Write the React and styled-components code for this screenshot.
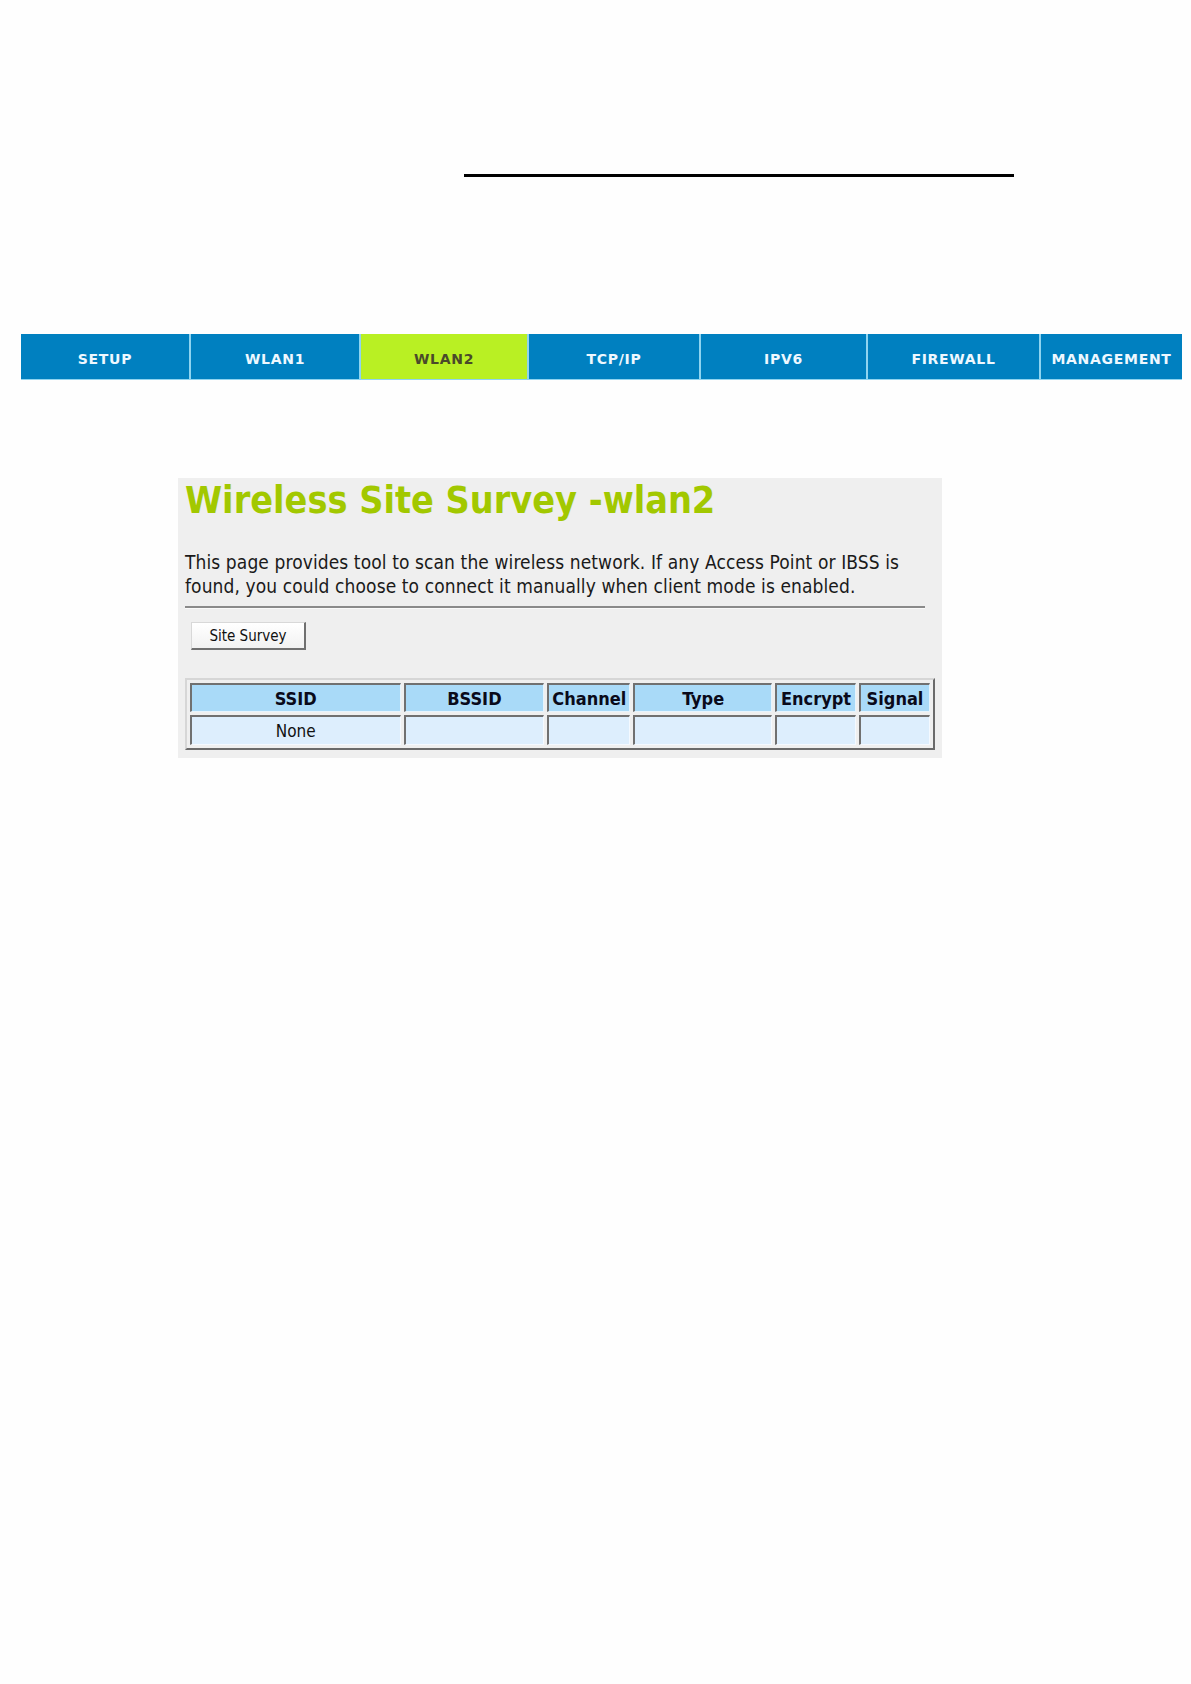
import React from 'react';
import styled, { createGlobalStyle } from 'styled-components';

const GlobalStyle = createGlobalStyle`
  body {
    margin: 0;
    background: #fefefe;
    font-family: "DejaVu Sans Condensed", "DejaVu Sans", sans-serif;
    font-stretch: condensed;
  }
`;

const Page = styled.div`
  width: 1191px;
  min-height: 1684px;
  padding-top: 174px;
  box-sizing: border-box;
`;

const TopRule = styled.div`
  margin-left: 464px;
  width: 550px;
  border-top: 3px solid #000;
`;

const NavBar = styled.ul`
  list-style: none;
  margin: 157px 9px 0 21px;
  padding: 0;
  display: flex;
  height: 45px;
  background-color: #0080c0;
  border-bottom: 1px solid #8fd4f0;
`;

const NavItem = styled.li`
  width: ${(p) => p.$w}px;
  flex: ${(p) => (p.$last ? '1' : 'none')};
  box-sizing: border-box;
  display: flex;
  align-items: center;
  justify-content: center;
  background-color: ${(p) => (p.$active ? '#b9f023' : '#0080c0')};
  border-left: ${(p) => (p.$first ? 'none' : '2px solid #8fd4f0')};
  color: ${(p) => (p.$active ? '#4a4a2a' : '#eef8ff')};
  font-family: "DejaVu Sans", sans-serif;
  font-stretch: normal;
  font-weight: bold;
  font-size: 14px;
  letter-spacing: 0.7px;
  padding-top: 4px;
`;

const Panel = styled.div`
  margin: 98px 0 0 178px;
  width: 764px;
  background-color: #efefef;
  padding: 1px 7px 8px 7px;
  box-sizing: border-box;
`;

const Title = styled.h1`
  margin: 0;
  color: #a2c800;
  font-size: 37.4px;
  font-weight: bold;
  line-height: 42px;
`;

const Intro = styled.p`
  margin: 29px 0 0 0;
  font-size: 19px;
  line-height: 24px;
  letter-spacing: 0.1px;
  color: #1a1a1a;
  max-width: 740px;
`;

const Divider = styled.hr`
  margin: 8px 10px 0 0;
  border: none;
  border-top: 2px solid #8a8a8a;
  border-bottom: 1px solid #fafafa;
`;

const SurveyButton = styled.button`
  margin: 13px 0 0 6px;
  width: 115px;
  height: 28px;
  padding: 0;
  font-family: "DejaVu Sans Condensed", "DejaVu Sans", sans-serif;
  font-stretch: condensed;
  font-size: 15px;
  color: #111;
  background: linear-gradient(#ffffff, #f2f2f2);
  border: 1px solid #d8d8d8;
  border-right: 2px solid #707070;
  border-bottom: 2px solid #707070;
`;

const SurveyTable = styled.table`
  margin-top: 28px;
  border-collapse: separate;
  border-spacing: 3px;
  table-layout: fixed;
  border-top: 2px solid #d6d6d6;
  border-left: 2px solid #d6d6d6;
  border-right: 2px solid #6a6a6a;
  border-bottom: 2px solid #6a6a6a;
`;

const HeadCell = styled.th`
  width: ${(p) => p.$w}px;
  height: 29px;
  box-sizing: border-box;
  padding: 0;
  background-color: #a9daf8;
  border-top: 2px solid #707070;
  border-left: 2px solid #707070;
  border-right: 1px solid #e6f4fd;
  border-bottom: 1px solid #e6f4fd;
  font-size: 18px;
  font-weight: bold;
  color: #0a0a1a;
  text-align: center;
  white-space: nowrap;
  overflow: hidden;
`;

const DataCell = styled.td`
  height: 30px;
  box-sizing: border-box;
  padding: 0;
  background-color: #ddeefd;
  border-top: 2px solid #707070;
  border-left: 2px solid #707070;
  border-right: 1px solid #f4f9ff;
  border-bottom: 1px solid #f4f9ff;
  font-size: 17px;
  color: #111;
  text-align: center;
`;

const tabs = [
  { label: 'SETUP', w: 168 },
  { label: 'WLAN1', w: 170 },
  { label: 'WLAN2', w: 168, active: true },
  { label: 'TCP/IP', w: 172 },
  { label: 'IPV6', w: 167 },
  { label: 'FIREWALL', w: 173 },
  { label: 'MANAGEMENT', w: 140 },
];

const columns = [
  { label: 'SSID', w: 211 },
  { label: 'BSSID', w: 141 },
  { label: 'Channel', w: 83 },
  { label: 'Type', w: 139 },
  { label: 'Encrypt', w: 81 },
  { label: 'Signal', w: 71 },
];

export default function App() {
  return (
    <Page>
      <GlobalStyle />
      <TopRule />
      <NavBar>
        {tabs.map((t, i) => (
          <NavItem
            key={t.label}
            $w={t.w}
            $active={t.active}
            $first={i === 0}
            $last={i === tabs.length - 1}
          >
            {t.label}
          </NavItem>
        ))}
      </NavBar>
      <Panel>
        <Title>Wireless Site Survey -wlan2</Title>
        <Intro>
          This page provides tool to scan the wireless network. If any Access Point or IBSS is
          found, you could choose to connect it manually when client mode is enabled.
        </Intro>
        <Divider />
        <SurveyButton type="button">Site Survey</SurveyButton>
        <SurveyTable>
          <thead>
            <tr>
              {columns.map((c) => (
                <HeadCell key={c.label} $w={c.w}>{c.label}</HeadCell>
              ))}
            </tr>
          </thead>
          <tbody>
            <tr>
              <DataCell>None</DataCell>
              <DataCell />
              <DataCell />
              <DataCell />
              <DataCell />
              <DataCell />
            </tr>
          </tbody>
        </SurveyTable>
      </Panel>
    </Page>
  );
}
